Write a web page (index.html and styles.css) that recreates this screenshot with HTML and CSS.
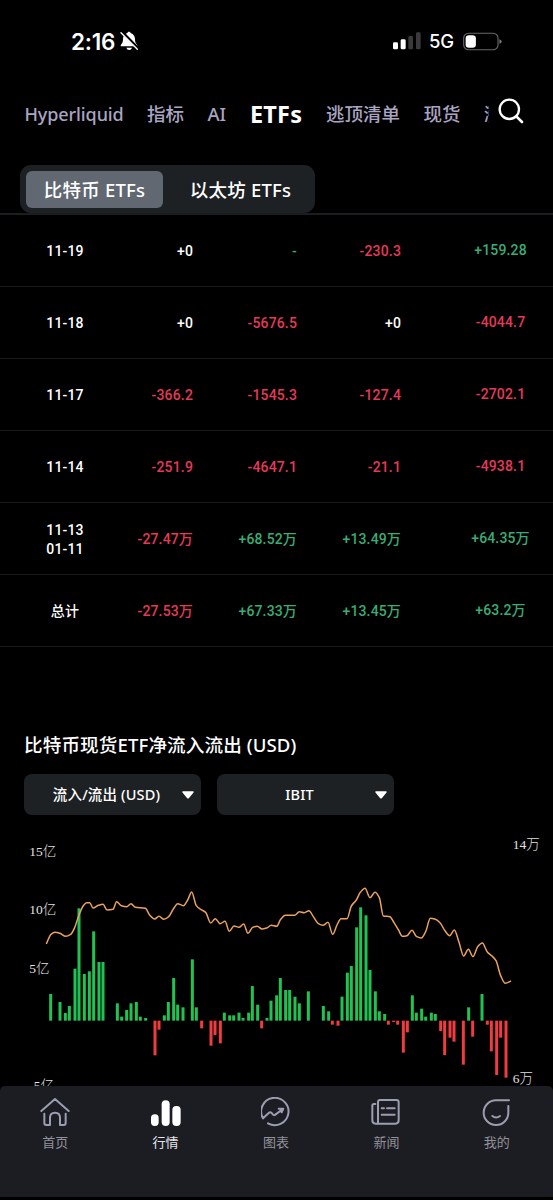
FILE: index.html
```html
<!DOCTYPE html>
<html lang="zh-CN">
<head>
<meta charset="utf-8">
<title>ETFs</title>
<link rel="stylesheet" href="styles.css">
</head>
<body>
<div class="status">
  <span class="time">2:16</span>
  <svg class="bell" viewBox="0 0 54 60"><path d="M27 2c-3 0-4 2-5 4C13 9 9 16 9 25c0 8-2 12-6 16-2 3-1 5 2 5h44c3 0 4-2 2-5-4-4-6-8-6-16 0-9-4-16-13-19-1-2-2-4-5-4zM19 50h17q-2 7-8.500 7T19 50z" fill="#fff"/><path d="M5 2L55 53" stroke="#000" stroke-width="9"/><path d="M3 5L52 55" stroke="#fff" stroke-width="4" stroke-linecap="round"/></svg>
  <svg class="signal" viewBox="0 0 84 54"><rect x="0" y="31" width="15" height="21" rx="4" fill="#fff"/><rect x="23" y="22" width="15" height="30" rx="4" fill="#fff"/><rect x="46" y="12" width="14" height="40" rx="4" fill="#3a3a3c"/><rect x="69" y="1" width="14" height="51" rx="4" fill="#3a3a3c"/></svg>
  <span class="net">5G</span>
  <svg class="battery" viewBox="0 0 118 56"><rect x="2" y="3" width="104" height="50" rx="15" fill="none" stroke="#68686a" stroke-width="3.500"/><rect x="8" y="9" width="31" height="38" rx="10" fill="#fff"/><path d="M110 21q7 2 7 7t-7 7z" fill="#78787a"/></svg>
</div>
<div class="topbar">
  <nav class="tabs">
    <span class="tab t-hyper">Hyperliquid</span><span class="tab t-two">指标</span><span class="tab t-ai">AI</span><span class="tab t-etf">ETFs</span><span class="tab t-four">逃顶清单</span><span class="tab t-two">现货</span><span class="tab t-two">涨幅</span>
  </nav>
  <svg class="search" viewBox="0 0 78 78"><circle cx="34" cy="34" r="29" fill="none" stroke="#fff" stroke-width="7"/><path d="M55 55L72 72" stroke="#fff" stroke-width="8" stroke-linecap="round"/></svg>
</div>
<div class="segment"><span class="seg on">比特币 ETFs</span><span class="seg">以太坊 ETFs</span></div>
<div class="table">
  <div class="row"><span>11-19</span><span>+0</span><span class="up">-</span><span class="down">-230.3</span><span class="up">+159.28</span></div>
  <div class="row"><span>11-18</span><span>+0</span><span class="down">-5676.5</span><span>+0</span><span class="down">-4044.7</span></div>
  <div class="row"><span>11-17</span><span class="down">-366.2</span><span class="down">-1545.3</span><span class="down">-127.4</span><span class="down">-2702.1</span></div>
  <div class="row"><span>11-14</span><span class="down">-251.9</span><span class="down">-4647.1</span><span class="down">-21.1</span><span class="down">-4938.1</span></div>
  <div class="row"><span>11-13<br>01-11</span><span class="down">-27.47万</span><span class="up">+68.52万</span><span class="up">+13.49万</span><span class="up">+64.35万</span></div>
  <div class="row"><span>总计</span><span class="down">-27.53万</span><span class="up">+67.33万</span><span class="up">+13.45万</span><span class="up">+63.2万</span></div>
</div>
<h2 class="title">比特币现货ETF净流入流出 (USD)</h2>
<div class="selects">
  <div class="select"><span>流入/流出 (USD)</span><svg class="caret" viewBox="0 0 36 24"><path d="M3 1h30q4 1 1 4L21 21q-3 3-6 0L2 5Q-1 2 3 1z" fill="#fff"/></svg></div>
  <div class="select"><span>IBIT</span><svg class="caret" viewBox="0 0 36 24"><path d="M3 1h30q4 1 1 4L21 21q-3 3-6 0L2 5Q-1 2 3 1z" fill="#fff"/></svg></div>
</div>
<svg class="chart" viewBox="0 0 1659 753">
  <g id="bars"></g>
  <path id="price" class="price"/>
  <g class="axis">
    <text x="88" y="62">15亿</text><text x="88" y="238">10亿</text><text x="88" y="414">5亿</text><text x="88" y="765">-5亿</text>
    <text x="1538" y="41">14万</text><text x="1538" y="745">6万</text>
  </g>
</svg>
<footer class="nav">
  <div class="item"><svg viewBox="0 0 90 90"><path d="M4 42L45 6L86 42M13 50V78Q13 84 19 84H30V62Q30 47 45 47T60 62V84H71Q77 84 77 78V50"/></svg><span>首页</span></div>
  <div class="item active"><svg viewBox="0 0 90 90"><rect x="0" y="52" width="23" height="35" rx="11"/><rect x="32" y="10" width="24" height="77" rx="12"/><rect x="64" y="27" width="25" height="60" rx="12"/></svg><span>行情</span></div>
  <div class="item"><svg viewBox="0 0 90 90"><path d="M6 64A41 41 0 1 1 21 79M6 64L24 47Q28 44 32 48L36 53Q39 56 43 53L66 36M53 35L67 35L62 46"/></svg><span>图表</span></div>
  <div class="item"><svg viewBox="0 0 90 90"><path d="M21 80V15Q21 9 27 9H76Q83 9 83 16V70Q83 80 73 80H14Q4 80 4 70V26Q4 21 9 21H13M32 34H39M48 34H71M32 53H71"/></svg><span>新闻</span></div>
  <div class="item"><svg viewBox="0 0 90 90"><path d="M81 10H43A37 37 0 1 0 79 47V27M31 57Q42 66 54 57"/></svg><span>我的</span></div>
</footer>
<script src="chart.js"></script>
</body>
</html>
```
FILE: styles.css
```css
* { box-sizing: border-box; }
body { margin: 0; width: 553px; height: 1200px; overflow: hidden; background: #000; color: #fff; font-family: Roboto, "Noto Sans CJK SC", sans-serif; }
svg { display: block; flex: none; }
.status { height: 84px; padding: 0 51px 2px 71px; display: flex; align-items: center; font-family: Inter, sans-serif; }
.time { width: 47px; font-size: 22.5px; font-weight: 600; letter-spacing: -0.2px; }
.bell { width: 18px; height: 20px; margin-left: 2px; }
.signal { width: 28px; height: 18px; margin-left: auto; }
.net { width: 26px; margin: 0 8px; font-size: 18.5px; font-weight: 500; letter-spacing: -0.3px; }
.battery { width: 39px; height: 19px; }
.topbar { height: 60px; display: flex; align-items: center; }
.tabs { width: 489px; padding-left: 24.5px; display: flex; gap: 23.5px; overflow: hidden; align-items: center; }
.tab { flex: none; white-space: nowrap; font-size: 18.500px; line-height: 28px; color: #aaa5c3; font-family: "Noto Sans", "Noto Sans CJK SC", sans-serif; font-weight: 500; }
.t-hyper { width: 99px; font-size: 18px; letter-spacing: -0.1px; }
.t-two { width: 37px; }
.t-ai { width: 19px; }
.t-etf { width: 52.5px; color: #fff; font-size: 23.5px; font-weight: 700; letter-spacing: .2px; }
.t-four { width: 74px; }
.search { width: 26px; height: 26px; margin: -6px 0 0 8.5px; }
.segment { width: 295px; height: 48px; margin: 21px 0 0 20px; padding: 6px; display: flex; border-radius: 11px; background: #1e2124; }
.seg { flex: 0 0 137px; height: 37px; border-radius: 6px; text-align: center; font-size: 18.5px; line-height: 37px; letter-spacing: .2px; font-family: "Noto Sans", "Noto Sans CJK SC", sans-serif; font-weight: 500; }
.seg + .seg { margin-left: 9px; }
.on { background: #626871; }
.table { border-top: 2px solid #1b1d20; }
.row { height: 72px; border-bottom: 1px solid #1a1a1a; display: grid; grid-template-columns: 130px 63px 104px 104px 152px; align-items: center; font-size: 14px; line-height: 18.5px; font-weight: 500; text-align: right; letter-spacing: .15px; padding-top: 2px; }
.row span:first-child { text-align: center; }
.row span:last-child { text-align: center; padding: 0 0 2px 47px; }
.up { color: #38ad78; }
.down { color: #e5395a; }
.title { margin: 84px 0 0 24px; font-size: 18.6px; line-height: 28px; letter-spacing: .1px; font-weight: 500; font-family: "Noto Sans", "Noto Sans CJK SC", sans-serif; }
.selects { display: flex; gap: 16px; margin: 15px 0 0 24px; }
.select { width: 177px; height: 41px; padding: 0 7px; display: flex; align-items: center; border-radius: 8px; background: #1e2124; font: 500 14.5px "Noto Sans", "Noto Sans CJK SC", sans-serif; }
.select span { flex: 1; text-align: center; white-space: nowrap; line-height: 20px; letter-spacing: .15px; padding-bottom: 1px; }
.caret { width: 12px; height: 8px; }
.chart { width: 553px; height: 251px; margin-top: 20px; overflow: hidden; }
.price { fill: none; stroke: #e9a260; stroke-width: 4.500; }
.gain { fill: #20c254; }
.loss { fill: #f03c40; }
.axis { fill: #e2e2e2; font: 300 40.5px "Liberation Serif", "Noto Sans CJK SC", serif; }
.nav { height: 111px; padding: 11px 1px 0 0; display: grid; grid-template-columns: repeat(5, 1fr); background: #1c1d22; border-radius: 5px 5px 0 0; }
.item { display: flex; flex-direction: column; align-items: center; color: #9a9eb0; }
.item svg { width: 30px; height: 30px; fill: none; stroke: currentColor; stroke-width: 6; stroke-linecap: round; stroke-linejoin: round; }
.item span { margin-top: 6px; font-size: 13px; line-height: 20px; color: #92929a; }
.active svg { fill: #fff; stroke: none; }
.item.active span { color: #e8e8ec; }
```
FILE: chart.js
```js
const BASE = 557;
const flows = [
  [152,477],[180,501],[196,534],[208,513],[225,401],[237,220],[253,417],[268,409],[281,289],[297,381],[309,381],
  [352,505],[365,545],[380,525],[393,505],[409,501],[421,545],[437,549],[465,661],[477,584],[493,541],[505,501],
  [521,429],[533,509],[549,517],[577,373],[589,517],[605,580],[633,632],[645,600],[661,625],[673,533],[689,541],
  [701,541],[717,533],[729,549],[746,533],[757,453],[773,509],[785,580],[801,549],[813,497],[830,481],[841,429],
  [857,465],[869,465],[885,485],[898,505],[925,469],[970,513],[986,529],[997,569],[1014,572],[1026,485],[1042,413],
  [1054,393],[1070,277],[1082,217],[1098,241],[1110,405],[1126,469],[1138,529],[1154,537],[1165,569],[1181,561],
  [1193,569],[1210,653],[1222,592],[1237,481],[1249,533],[1265,521],[1277,545],[1294,533],[1306,537],[1322,588],
  [1334,660],[1350,608],[1362,620],[1390,689],[1406,517],[1418,605],[1446,477],[1462,569],[1474,649],[1490,720],
  [1502,608],[1518,728]
];
const prices = [
  [139,327],[153,298],[165,292],[180,295],[197,304],[212,298],[223,280],[237,240],[250,212],[260,203],[269,203],
  [279,219],[295,211],[309,208],[321,225],[339,223],[350,200],[364,212],[380,215],[393,206],[406,217],[436,220],
  [449,240],[464,252],[477,244],[492,253],[506,245],[520,222],[533,206],[550,212],[563,195],[575,171],[589,212],
  [602,223],[617,232],[632,264],[646,251],[660,266],[675,259],[688,289],[702,273],[717,277],[731,267],[744,295],
  [758,277],[772,274],[786,282],[800,279],[814,271],[830,274],[842,253],[856,241],[884,241],[898,230],[913,233],
  [927,227],[940,245],[954,265],[969,271],[984,262],[998,298],[1011,270],[1023,251],[1041,251],[1054,213],
  [1069,195],[1081,172],[1095,160],[1110,188],[1125,172],[1138,188],[1150,243],[1170,245],[1182,263],[1195,284],
  [1207,304],[1221,302],[1236,286],[1249,304],[1264,309],[1277,290],[1291,250],[1306,253],[1320,263],[1334,286],
  [1349,302],[1363,285],[1377,322],[1391,363],[1405,343],[1419,365],[1433,335],[1447,324],[1462,351],[1476,363],
  [1488,377],[1502,422],[1516,445],[1533,438]
];

const bars = document.getElementById("bars");
for (const [x, y] of flows) {
  const r = document.createElementNS("http://www.w3.org/2000/svg", "rect");
  r.setAttribute("x", x - 4.5);
  r.setAttribute("y", Math.min(y, BASE));
  r.setAttribute("width", 9);
  r.setAttribute("height", Math.abs(y - BASE));
  r.setAttribute("class", y < BASE ? "gain" : "loss");
  bars.appendChild(r);
}

// Monotone cubic interpolation: slopes are flat at local extremes.
const n = prices.length;
const slope = i => (prices[i + 1][1] - prices[i][1]) / (prices[i + 1][0] - prices[i][0]);
const tangent = prices.map((p, i) => {
  if (i === 0) return slope(0);
  if (i === n - 1) return slope(n - 2);
  const a = slope(i - 1), b = slope(i);
  return a * b <= 0 ? 0 : 2 * a * b / (a + b);
});
let d = `M${prices[0]}`;
for (let i = 0; i < n - 1; i++) {
  const [x0, y0] = prices[i], [x1, y1] = prices[i + 1], h = (x1 - x0) / 3;
  d += `C${x0 + h} ${y0 + tangent[i] * h} ${x1 - h} ${y1 - tangent[i + 1] * h} ${x1} ${y1}`;
}
document.getElementById("price").setAttribute("d", d);
```
